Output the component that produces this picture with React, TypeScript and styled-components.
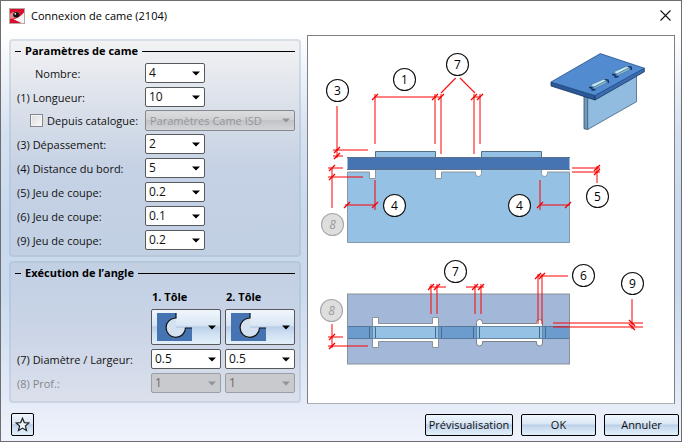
import React from "react";
import styled, { createGlobalStyle, css } from "styled-components";

const GlobalStyle = createGlobalStyle`
  *, *::before, *::after { box-sizing: border-box; }
  body {
    margin: 0;
    font-family: "Open Sans", "Noto Sans", sans-serif;
    font-size: 11px;
    line-height: 16px;
    color: #111;
  }
`;

/* ---------- window frame ---------- */

const Window = styled.div`
  display: flex;
  flex-direction: column;
  min-height: 100vh;
  border: 1px solid #6e6e70;
  background: linear-gradient(
    #fff 0,
    #fff 7%,
    #d5e1f1 30%,
    #c8d9ee 48%,
    #c9daee 66%,
    #e6ecf8 92%,
    #eff3fb 100%
  );
`;

const TitleBar = styled.header`
  display: flex;
  align-items: center;
  height: 29px;
  padding: 0 10px 0 8px;
  background: #fff;
`;

const Title = styled.h1`
  flex: 1;
  margin: 0 0 0 6px;
  font-size: 11px;
  font-weight: 400;
  color: #000;
`;

const CloseButton = styled.button`
  display: flex;
  padding: 0;
  border: 0;
  background: none;
`;

const Main = styled.main`
  display: grid;
  grid-template-columns: 292px minmax(0, 1fr);
  gap: 6px;
  flex: 1 0 auto;
  padding: 5px 6px 0 8px;
`;

const Settings = styled.div`
  display: flex;
  flex-direction: column;
  gap: 4px;
  padding-top: 4px;
`;

/* ---------- parameter groups ---------- */

const Group = styled.section<{ $tone: "upper" | "lower" }>`
  padding: 0 4px 3px;
  border: 2px solid rgba(150, 165, 185, 0.35);
  border-radius: 4px;
  background: ${({ $tone }) =>
    $tone === "upper"
      ? "linear-gradient(#f2f2f4, #dbe1ea 30%, #c5d1e4 60%, #c2d0e4)"
      : "linear-gradient(#c2d0e4, #c8d3e6 40%, #dbe0ec)"};
  background-clip: padding-box;
`;

const GroupTitle = styled.h2`
  display: flex;
  align-items: center;
  gap: 4px;
  height: 20px;
  margin: 0;
  font-size: 11px;
  font-weight: 700;
  color: #000;

  &::before,
  &::after {
    content: "";
    width: 6px;
    height: 1px;
    background: #000;
  }
  &::after {
    flex: 1;
  }
`;

const Row = styled.div<{ $height?: number }>`
  display: grid;
  grid-template-columns: 130px minmax(0, 1fr);
  align-items: center;
  height: ${({ $height = 24 }) => $height}px;
`;

const CornerGrid = styled.div`
  display: grid;
  grid-template-columns: 132px 1fr 1fr;
  gap: 4px;
  align-items: center;
  padding: 6px 0 5px;
`;

const Label = styled.label<{ $indent?: boolean; $muted?: boolean }>`
  padding: 1px 0 0 ${({ $indent }) => ($indent ? 20 : 2)}px;
  white-space: nowrap;
  color: ${({ $muted }) => ($muted ? "#85878c" : "#111")};
`;

const CheckLabel = styled.label`
  display: flex;
  align-items: center;
  gap: 4px;
  padding-left: 15px;
  white-space: nowrap;
`;

const CheckBox = styled.input`
  appearance: none;
  flex: none;
  width: 13px;
  height: 13px;
  margin: 0;
  border: 1px solid #85888c;
  background: linear-gradient(135deg, #dcdcdc, #fafafa);
  box-shadow: inset 0 0 0 1px #f4f4f4;

  &:checked {
    background: #4673b1;
  }
`;

const ColumnHeading = styled.h3`
  margin: 0 0 0 1px;
  font-size: 11px;
  line-height: 16px;
  font-weight: 700;
  color: #000;
`;

/* ---------- controls ---------- */

const Combo = styled.span<{ $width?: string; $tall?: boolean }>`
  display: grid;
  grid-template-columns: 1fr 13px;
  align-items: center;
  width: ${({ $width = "100%" }) => $width};
  height: ${({ $tall }) => ($tall ? 21 : 20)}px;

  & > svg {
    grid-area: 1 / 2;
    pointer-events: none;
  }
`;

const ComboSelect = styled.select<{ $look: "edit" | "flat" | "gradient" }>`
  appearance: none;
  grid-area: 1 / 1 / 2 / 3;
  width: 100%;
  height: 100%;
  padding: 0 14px 0 3px;
  border: 1px solid #58595b;
  border-radius: 2px;
  background: #fff;
  color: #111;
  font: inherit;
  font-size: 12px;
  line-height: 16px;
  opacity: 1;

  ${({ $look }) =>
    $look === "flat" &&
    css`
      border-color: #9a9ea5;
      background: #c8cacd;
      color: #77666c;
    `}
  ${({ $look }) =>
    $look === "gradient" &&
    css`
      padding-left: 4px;
      border-color: #85898e;
      background: linear-gradient(#dcdddf, #d0d1d3 48%, #c1c3c6 50%, #d3d5d8);
      color: #94969a;
      font-size: 11px;
    `}
`;

const glossy = css`
  border: 1px solid #000;
  border-radius: 2px;
  background: linear-gradient(#f0f6fd, #d9e6f4 45%, #b9cfe8 50%, #cfe0f2 70%, #e3f0fb);
  font: inherit;
  color: #111;
`;

const ShapeButton = styled.button`
  ${glossy}
  display: grid;
  grid-template-columns: 1fr 12px;
  align-items: center;
  height: 36px;
  padding: 0 0 0 5px;
  border-color: #58595b;
`;

const Footer = styled.footer`
  display: flex;
  align-items: center;
  gap: 8px;
  padding: 9px 2px 5px 10px;
`;

const FavouriteButton = styled.button`
  ${glossy}
  display: grid;
  place-items: center;
  width: 23px;
  height: 23px;
  margin-right: auto;
  padding: 0;
`;

const ActionButton = styled.button<{ $wide?: boolean }>`
  ${glossy}
  width: ${({ $wide }) => ($wide ? 88 : 75)}px;
  height: 22px;
  padding: 0;
  line-height: 16px;
`;

/* ---------- preview ---------- */

const Preview = styled.figure`
  display: flex;
  margin: 0;
  border: 1px solid #808084;
  border-bottom-color: #adb0b5;
  background: #fff;
`;

const Drawing = styled.svg`
  display: block;
  width: 100%;
  height: 100%;
`;

const Bubble = styled.circle<{ $off?: boolean }>`
  fill: ${({ $off }) => ($off ? "#dedede" : "#fff")};
  stroke: ${({ $off }) => ($off ? "#a8a8a8" : "#111")};
  stroke-width: 1.1;
`;

const BubbleText = styled.text<{ $off?: boolean }>`
  font-size: 12px;
  font-style: ${({ $off }) => ($off ? "italic" : "normal")};
  text-anchor: middle;
  fill: ${({ $off }) => ($off ? "#9a9a9a" : "#000")};
`;

/* ---------- icons ---------- */

const Arrow = ({ muted }: { muted?: boolean }) => (
  <svg width="8" height="5" viewBox="0 0 8 5" aria-hidden="true">
    <path d="M0 0.5H8L4 4.5Z" fill={muted ? "#919397" : "#000"} />
  </svg>
);

const Logo = () => (
  <svg width="16" height="16" viewBox="0 0 16 16" aria-hidden="true">
    <rect x="0.5" y="0.5" width="15" height="15" fill="#d80f2c" stroke="#b9a7a9" />
    <path d="M1 6C4 3.5 7 3 11 5L7 10L1 11Z" fill="#e9a4a4" opacity="0.8" />
    <path d="M4 11.5C8 10.5 12 8 15 4.5V15H12Z" fill="#f6f3f3" />
    <path d="M1 13.5L4 11.5L11 15H1Z" fill="#f3dcde" />
    <path d="M1 15V12L4 11L12 15Z" fill="#d80f2c" />
    <ellipse cx="7.3" cy="6.8" rx="3.2" ry="2.8" fill="#161113" />
    <circle cx="6.3" cy="5.8" r="0.9" fill="#fff" />
  </svg>
);

const Cross = () => (
  <svg width="11" height="11" viewBox="0 0 11 11" aria-hidden="true">
    <path d="M0.5 0.5L10.5 10.5M10.5 0.5L0.5 10.5" stroke="#111" strokeWidth="1.1" />
  </svg>
);

const CornerShape = () => (
  <svg width="36" height="28" viewBox="0 0 36 28" aria-hidden="true">
    <path d="M0 0H19V5A9.7 9.7 0 1 0 28.5 15H35V28H0Z" fill="#4673b1" />
    <path d="M19 5A9.7 9.7 0 1 0 28.5 15L19 15Z" fill="#d3e1f1" />
    <path d="M19 0V5A9.7 9.7 0 1 0 28.5 15H35" fill="none" stroke="#111" strokeWidth="1.2" />
  </svg>
);

const Star = () => (
  <svg width="15" height="15" viewBox="0 0 15 15" aria-hidden="true">
    <path
      d="M7.5 1.3L9.3 5.6L13.9 6L10.4 9L11.5 13.5L7.5 11.1L3.5 13.5L4.6 9L1.1 6L5.7 5.6Z"
      fill="#eef5fc"
      stroke="#222"
      strokeWidth="1.2"
    />
  </svg>
);

/* ---------- preview drawing ---------- */

type Mark = { x: number; y: number; n: number; off?: boolean };

const marks: Mark[] = [
  { x: 337.5, y: 90.5, n: 3 },
  { x: 404.5, y: 79.5, n: 1 },
  { x: 457.5, y: 64.5, n: 7 },
  { x: 332.5, y: 224.5, n: 8, off: true },
  { x: 394.5, y: 205.5, n: 4 },
  { x: 519.5, y: 205.5, n: 4 },
  { x: 597.5, y: 196.5, n: 5 },
  { x: 455.5, y: 271.5, n: 7 },
  { x: 583.5, y: 275.5, n: 6 },
  { x: 632.5, y: 283.5, n: 9 },
  { x: 331.5, y: 310.5, n: 8, off: true },
];

const dimensionLines = [
  "M375 94V144 M435 94V144 M441 94V154 M474 94V154 M480 94V144 M375 97H441 M474 97H480",
  "M337 106V158 M333 150H368 M333 156H343",
  "M332 168V208 M328 168H343 M328 177H363",
  "M375 180V210 M345 205H375 M540 180V210 M540 205H570",
  "M572 168H600 M572 172H600 M597 166V183",
  "M431 284V314 M437 284V314 M429 287H446 M475 284V314 M481 284V314 M466 287H484",
  "M538 274V324 M542 274V324 M538 276H568",
  "M632 299V329 M553 323H643 M553 327H643",
  "M332 324V348 M328 337H343 M328 346H368",
].join(" ");

const ticks: [number, number][] = [
  [375, 97], [435, 97], [441, 97], [474, 97], [480, 97],
  [337, 150], [337, 156], [332, 168], [332, 177],
  [347, 205], [375, 205], [540, 205], [568, 205],
  [597, 168], [597, 172],
  [431, 287], [437, 287], [475, 287], [481, 287],
  [538, 276], [542, 276], [332, 337], [332, 346],
];

const tickPath =
  ticks.map(([x, y]) => `M${x - 3} ${y + 3}L${x + 3} ${y - 3}`).join(" ") +
  " M629 320L635 326 M629 324L635 330";

const AssemblyDrawing = () => (
  <Drawing
    viewBox="308 36 366 367"
    preserveAspectRatio="xMidYMin meet"
    role="img"
    aria-label="Schéma de la connexion de came"
  >
    {/* isometric thumbnail */}
    <g strokeLinejoin="round" strokeWidth="0.8">
      <path d="M584 94L587.7 97V129.5L584 128.7Z" fill="#7299b8" stroke="#2c5170" />
      <path d="M587.7 96L636.5 72V101.7L587.7 129.5Z" fill="#92bcdf" stroke="#3e6585" />
      <path d="M551 82L595 95.5V100L551 86Z" fill="#2b5896" stroke="#14345f" />
      <path d="M595 95.5L644.3 68.2V71.8L595 100Z" fill="#3b6cb0" stroke="#14345f" />
      <path d="M551 82L600.3 53.6L644.3 68.2L595 95.5Z" fill="#538bd0" stroke="#25528f" />
      <g id="cam">
        <path
          d="M589 87.5L592 87.7V90L595.5 89.5M604 80L608 80L608.5 83"
          fill="none"
          stroke="#12305a"
          strokeWidth="1.4"
        />
        <path d="M590.5 85L603.5 79.3L606.5 80.6L594 87Z" fill="#c4edf7" stroke="#38627d" strokeWidth="0.5" />
        <path d="M594 87L606.5 80.6V83L594 89Z" fill="#8dbbd6" stroke="#38627d" strokeWidth="0.5" />
      </g>
      <use href="#cam" x="23" y="-13" />
    </g>

    {/* front view */}
    <path
      d="M347.5 172H369.5V178.5H375.5V169H435.5V178.5H441.5V172H475.5V173.5A3 3 0 0 0 481.5 173.5V169H541.5V173.5A3 3 0 0 0 547.5 173.5V172H569.5V242.5H347.5Z"
      fill="#95c1e4"
      stroke="#8797a3"
    />
    <path d="M375.5 151.5H435.5V158H375.5ZM481.5 151.5H541.5V158H481.5Z" fill="#95c1e4" stroke="#527187" />
    <rect x="347.5" y="157.5" width="222" height="12" fill="#4673b1" />
    <path d="M347 157.5H570M347 169.5H570" stroke="#586f8d" />

    {/* top view */}
    <rect x="347.5" y="294" width="222" height="70" fill="#a3b8d8" stroke="#8a929c" />
    <rect x="348" y="326.5" width="221" height="12" fill="#6c9bcd" />
    <path d="M348 326.5H569M348 338.5H569" stroke="#58789b" />
    <path
      d="M372.5 317.5H378.5V323.5H432.5V317.5H438.5V347.5H432.5V341.5H378.5V347.5H372.5Z"
      fill="#fff"
      stroke="#8a929c"
    />
    <path
      d="M476.5 322.5A3 3 0 0 1 482.5 322.5V323.5H536.5V322.5A3 3 0 0 1 542.5 322.5V343A3 3 0 0 1 536.5 343V341.5H482.5V343A3 3 0 0 1 476.5 343Z"
      fill="#fff"
      stroke="#7b8188"
    />
    <path d="M372.5 326.5H438.5V338.5H372.5ZM476.5 326.5H542.5V338.5H476.5Z" fill="#95c1e4" stroke="#66879f" />
    <path
      d="M369.5 327V338M375.5 327V338M435.5 327V338M441.5 327V338M473.5 327V338M479.5 327V338M539.5 327V338M545.5 327V338"
      stroke="#436a90"
    />

    {/* dimensions */}
    <path d={dimensionLines} stroke="#ff0000" fill="none" />
    <path d="M455.7 78L441 93M460 78L475 93" stroke="#f01818" strokeWidth="1.2" />
    <path d={tickPath} stroke="#ee0000" strokeWidth="1.3" />

    {marks.map(({ x, y, n, off }, i) => (
      <g key={i}>
        <Bubble $off={off} cx={x} cy={y} r="11" />
        <BubbleText $off={off} x={x} y={y + 4.5}>
          {n}
        </BubbleText>
      </g>
    ))}
  </Drawing>
);

/* ---------- composed controls ---------- */

type ComboBoxProps = {
  id: string;
  value: string;
  width?: string;
  look?: "edit" | "flat" | "gradient";
  label?: string;
};

const ComboBox = ({ id, value, width, look = "edit", label }: ComboBoxProps) => (
  <Combo $width={width} $tall={look === "gradient"}>
    <ComboSelect id={id} $look={look} disabled={look !== "edit"} defaultValue={value} aria-label={label}>
      <option>{value}</option>
    </ComboSelect>
    <Arrow muted={look !== "edit"} />
  </Combo>
);

type Field = { id: string; label: string; value: string; indent?: boolean };

const topFields: Field[] = [
  { id: "nombre", label: "Nombre:", value: "4", indent: true },
  { id: "longueur", label: "(1) Longueur:", value: "10" },
];

const clearanceFields: Field[] = [
  { id: "depassement", label: "(3) Dépassement:", value: "2" },
  { id: "distance", label: "(4) Distance du bord:", value: "5" },
  { id: "jeu5", label: "(5) Jeu de coupe:", value: "0.2" },
  { id: "jeu6", label: "(6) Jeu de coupe:", value: "0.1" },
  { id: "jeu9", label: "(9) Jeu de coupe:", value: "0.2" },
];

const FieldRow = ({ id, label, value, indent }: Field) => (
  <Row>
    <Label htmlFor={id} $indent={indent}>
      {label}
    </Label>
    <ComboBox id={id} value={value} width="60px" />
  </Row>
);

export default function App() {
  return (
    <>
      <GlobalStyle />
      <Window>
        <TitleBar>
          <Logo />
          <Title>Connexion de came (2104)</Title>
          <CloseButton type="button" aria-label="Fermer">
            <Cross />
          </CloseButton>
        </TitleBar>

        <Main>
          <Settings>
            <Group $tone="upper">
              <GroupTitle>Paramètres de came</GroupTitle>
              {topFields.map((f) => (
                <FieldRow key={f.id} {...f} />
              ))}
              <Row $height={23}>
                <CheckLabel>
                  <CheckBox type="checkbox" />
                  Depuis catalogue:
                </CheckLabel>
                <ComboBox id="catalogue" value="Paramètres Came ISD" look="gradient" label="Catalogue" />
              </Row>
              {clearanceFields.map((f) => (
                <FieldRow key={f.id} {...f} />
              ))}
            </Group>

            <Group $tone="lower">
              <GroupTitle>Exécution de l’angle</GroupTitle>
              <CornerGrid>
                <span />
                <ColumnHeading>1. Tôle</ColumnHeading>
                <ColumnHeading>2. Tôle</ColumnHeading>
                <span />
                <ShapeButton type="button" aria-label="Forme de l’angle, tôle 1">
                  <CornerShape />
                  <Arrow />
                </ShapeButton>
                <ShapeButton type="button" aria-label="Forme de l’angle, tôle 2">
                  <CornerShape />
                  <Arrow />
                </ShapeButton>
                <Label htmlFor="diam1">(7) Diamètre / Largeur:</Label>
                <ComboBox id="diam1" value="0.5" />
                <ComboBox id="diam2" value="0.5" label="Diamètre / Largeur, tôle 2" />
                <Label htmlFor="prof1" $muted>
                  (8) Prof.:
                </Label>
                <ComboBox id="prof1" value="1" look="flat" />
                <ComboBox id="prof2" value="1" look="flat" label="Profondeur, tôle 2" />
              </CornerGrid>
            </Group>
          </Settings>

          <Preview>
            <AssemblyDrawing />
          </Preview>
        </Main>

        <Footer>
          <FavouriteButton type="button" aria-label="Favoris">
            <Star />
          </FavouriteButton>
          <ActionButton type="button" $wide>
            Prévisualisation
          </ActionButton>
          <ActionButton type="button">OK</ActionButton>
          <ActionButton type="button">Annuler</ActionButton>
        </Footer>
      </Window>
    </>
  );
}
